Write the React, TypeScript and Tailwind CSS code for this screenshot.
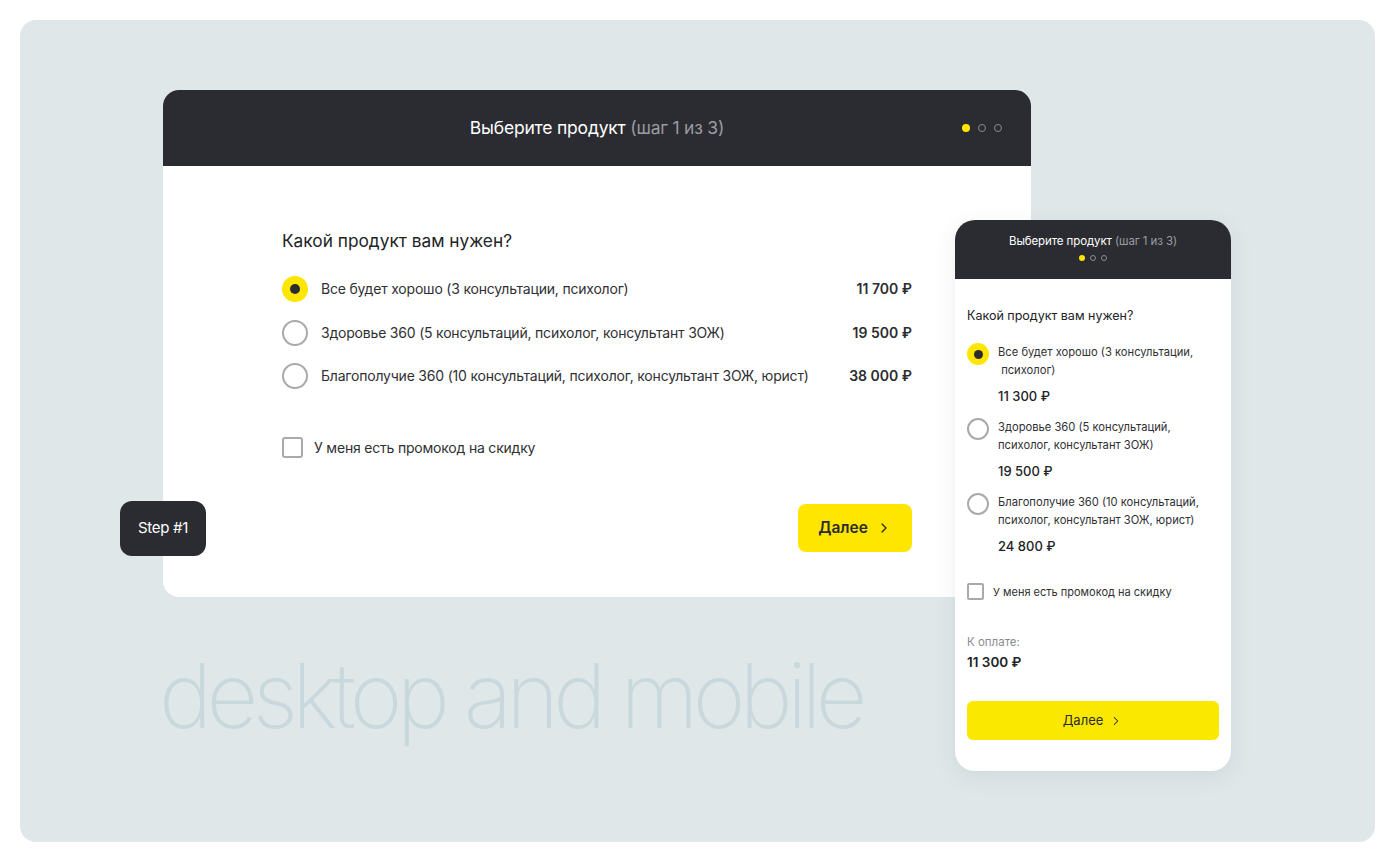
import { ChevronRight } from 'lucide-react';

type Product = {
  title: string;
  mobileLines: string[];
  price: string;
  mobilePrice: string;
};

const products: Product[] = [
  {
    title: 'Все будет хорошо (3 консультации, психолог)',
    mobileLines: ['Все будет хорошо (3 консультации,', '\u00a0психолог)'],
    price: '11 700 ₽',
    mobilePrice: '11 300 ₽',
  },
  {
    title: 'Здоровье 360 (5 консультаций, психолог, консультант ЗОЖ)',
    mobileLines: ['Здоровье 360 (5 консультаций,', 'психолог, консультант ЗОЖ)'],
    price: '19 500 ₽',
    mobilePrice: '19 500 ₽',
  },
  {
    title: 'Благополучие 360 (10 консультаций, психолог, консультант ЗОЖ, юрист)',
    mobileLines: ['Благополучие 360 (10 консультаций,', 'психолог, консультант ЗОЖ, юрист)'],
    price: '38 000 ₽',
    mobilePrice: '24 800 ₽',
  },
];

const font = { fontFamily: 'Inter, "Noto Sans", sans-serif' };

function Radio({ checked, size }: { checked: boolean; size: 'lg' | 'sm' }) {
  const box = size === 'lg' ? 'w-[26px] h-[26px]' : 'w-[22px] h-[22px]';
  const dot = size === 'lg' ? 'w-[10px] h-[10px]' : 'w-[9px] h-[9px]';
  if (checked) {
    return (
      <div className={`${box} shrink-0 rounded-full bg-[#ffe600] flex items-center justify-center`}>
        <div className={`${dot} rounded-full bg-[#2b2c31]`} />
      </div>
    );
  }
  return <div className={`${box} shrink-0 rounded-full border-2 border-[#a9a9a9]`} />;
}

function Dots({ size }: { size: 'lg' | 'sm' }) {
  const d = size === 'lg' ? 'w-[8px] h-[8px]' : 'w-[6px] h-[6px]';
  const gap = size === 'lg' ? 'gap-[8px]' : 'gap-[5px]';
  return (
    <div className={`flex items-center ${gap}`}>
      <div className={`${d} rounded-full bg-[#ffe600]`} />
      <div className={`${d} rounded-full border border-[#8a8b90]`} />
      <div className={`${d} rounded-full border border-[#8a8b90]`} />
    </div>
  );
}

function DesktopCard() {
  return (
    <div className="absolute left-[143px] top-[70px] w-[868px] h-[507px] rounded-2xl bg-white overflow-hidden flex flex-col">
      {/* Header */}
      <div className="relative h-[76px] shrink-0 bg-[#2b2c31] flex items-center justify-center">
        <div className="text-[17.5px] leading-[24px] text-white tracking-[-0.2px]">
          Выберите продукт <span className="text-[#9a9ba0]">(шаг 1 из 3)</span>
        </div>
        <div className="absolute right-[29px] top-[34px]">
          <Dots size="lg" />
        </div>
      </div>

      {/* Body */}
      <div className="px-[119px] pt-[63px] flex flex-col">
        <div className="text-[17.3px] leading-[24px] text-[#222326]">Какой продукт вам нужен?</div>

        <div className="mt-[23px] flex flex-col gap-[17.5px]">
          {products.map((p, i) => (
            <div key={i} className="flex items-center h-[26px]">
              <Radio checked={i === 0} size="lg" />
              <div className="ml-[13px] flex-1 whitespace-nowrap text-[14px] leading-[20px] text-[#2f3034] tracking-[-0.2px]">
                {p.title}
              </div>
              <div className="text-[14px] leading-[20px] font-semibold text-[#2b2c31]">{p.price}</div>
            </div>
          ))}
        </div>

        <div className="mt-[48px] flex items-center">
          <div className="w-[21px] h-[21px] rounded-[3px] border-2 border-[#a9a9a9]" />
          <div className="ml-[11px] text-[14px] leading-[20px] text-[#2f3034] tracking-[-0.2px]">
            У меня есть промокод на скидку
          </div>
        </div>

        <div className="mt-[46px] flex justify-end">
          <button className="w-[114px] h-[48px] rounded-lg bg-[#ffe600] flex items-center justify-center gap-[8px] text-[15.5px] font-semibold text-[#2b2c31]">
            Далее
            <ChevronRight size={16} strokeWidth={2} />
          </button>
        </div>
      </div>
    </div>
  );
}

function MobileCard() {
  return (
    <div className="absolute left-[935px] top-[200px] w-[276px] h-[551px] rounded-[20px] bg-white overflow-hidden flex flex-col shadow-[0_6px_24px_rgba(40,50,60,0.08)]">
      {/* Header */}
      <div className="h-[59px] shrink-0 bg-[#2b2c31] flex flex-col items-center pt-[13px]">
        <div className="text-[11.5px] leading-[16px] text-white tracking-[-0.1px]">
          Выберите продукт <span className="text-[#9a9ba0]">(шаг 1 из 3)</span>
        </div>
        <div className="mt-[6px]">
          <Dots size="sm" />
        </div>
      </div>

      {/* Body */}
      <div className="px-[12px] pt-[28px] flex flex-col">
        <div className="text-[12.5px] leading-[18px] text-[#222326]">Какой продукт вам нужен?</div>

        <div className="mt-[18px] flex flex-col gap-[12px]">
          {products.map((p, i) => (
            <div key={i} className="flex items-start">
              <Radio checked={i === 0} size="sm" />
              <div className="ml-[9px] flex flex-col">
                <div className="text-[11.2px] leading-[18px] text-[#2f3034] whitespace-nowrap">
                  {p.mobileLines.map((l, j) => (
                    <div key={j}>{l}</div>
                  ))}
                </div>
                <div className="mt-[7px] text-[13px] leading-[20px] font-medium text-[#222326]">
                  {p.mobilePrice}
                </div>
              </div>
            </div>
          ))}
        </div>

        <div className="mt-[27px] flex items-center">
          <div className="w-[17px] h-[17px] rounded-[2px] border-2 border-[#a9a9a9]" />
          <div className="ml-[9px] text-[11px] leading-[16px] text-[#2f3034]">
            У меня есть промокод на скидку
          </div>
        </div>

        <div className="mt-[34px] text-[11.5px] leading-[16px] text-[#8a8b90]">К оплате:</div>
        <div className="mt-[2px] text-[13.5px] leading-[20px] font-semibold text-[#222326]">11 300 ₽</div>

        <button className="mt-[29px] w-full h-[39px] rounded-md bg-[#fbe800] flex items-center justify-center gap-[6px] text-[13px] text-[#2b2c31]">
          Далее
          <ChevronRight size={14} strokeWidth={1.75} />
        </button>
      </div>
    </div>
  );
}

export default function App() {
  return (
    <div className="w-[1395px] h-[862px] bg-white p-5" style={font}>
      <div className="relative w-full h-full rounded-2xl bg-[#dfe7e9] overflow-hidden">
        {/* Caption */}
        <div className="absolute left-[139px] top-[631px] text-[90px] leading-none font-extralight text-[#c9d8dd] tracking-[-5.8px] whitespace-nowrap">
          desktop and mobile
        </div>

        <DesktopCard />

        {/* Step badge */}
        <div className="absolute left-[100px] top-[481px] w-[86px] h-[55px] rounded-xl bg-[#2b2c31] flex items-center justify-center text-[15px] text-white tracking-[-0.3px]">
          Step #1
        </div>

        <MobileCard />
      </div>
    </div>
  );
}
